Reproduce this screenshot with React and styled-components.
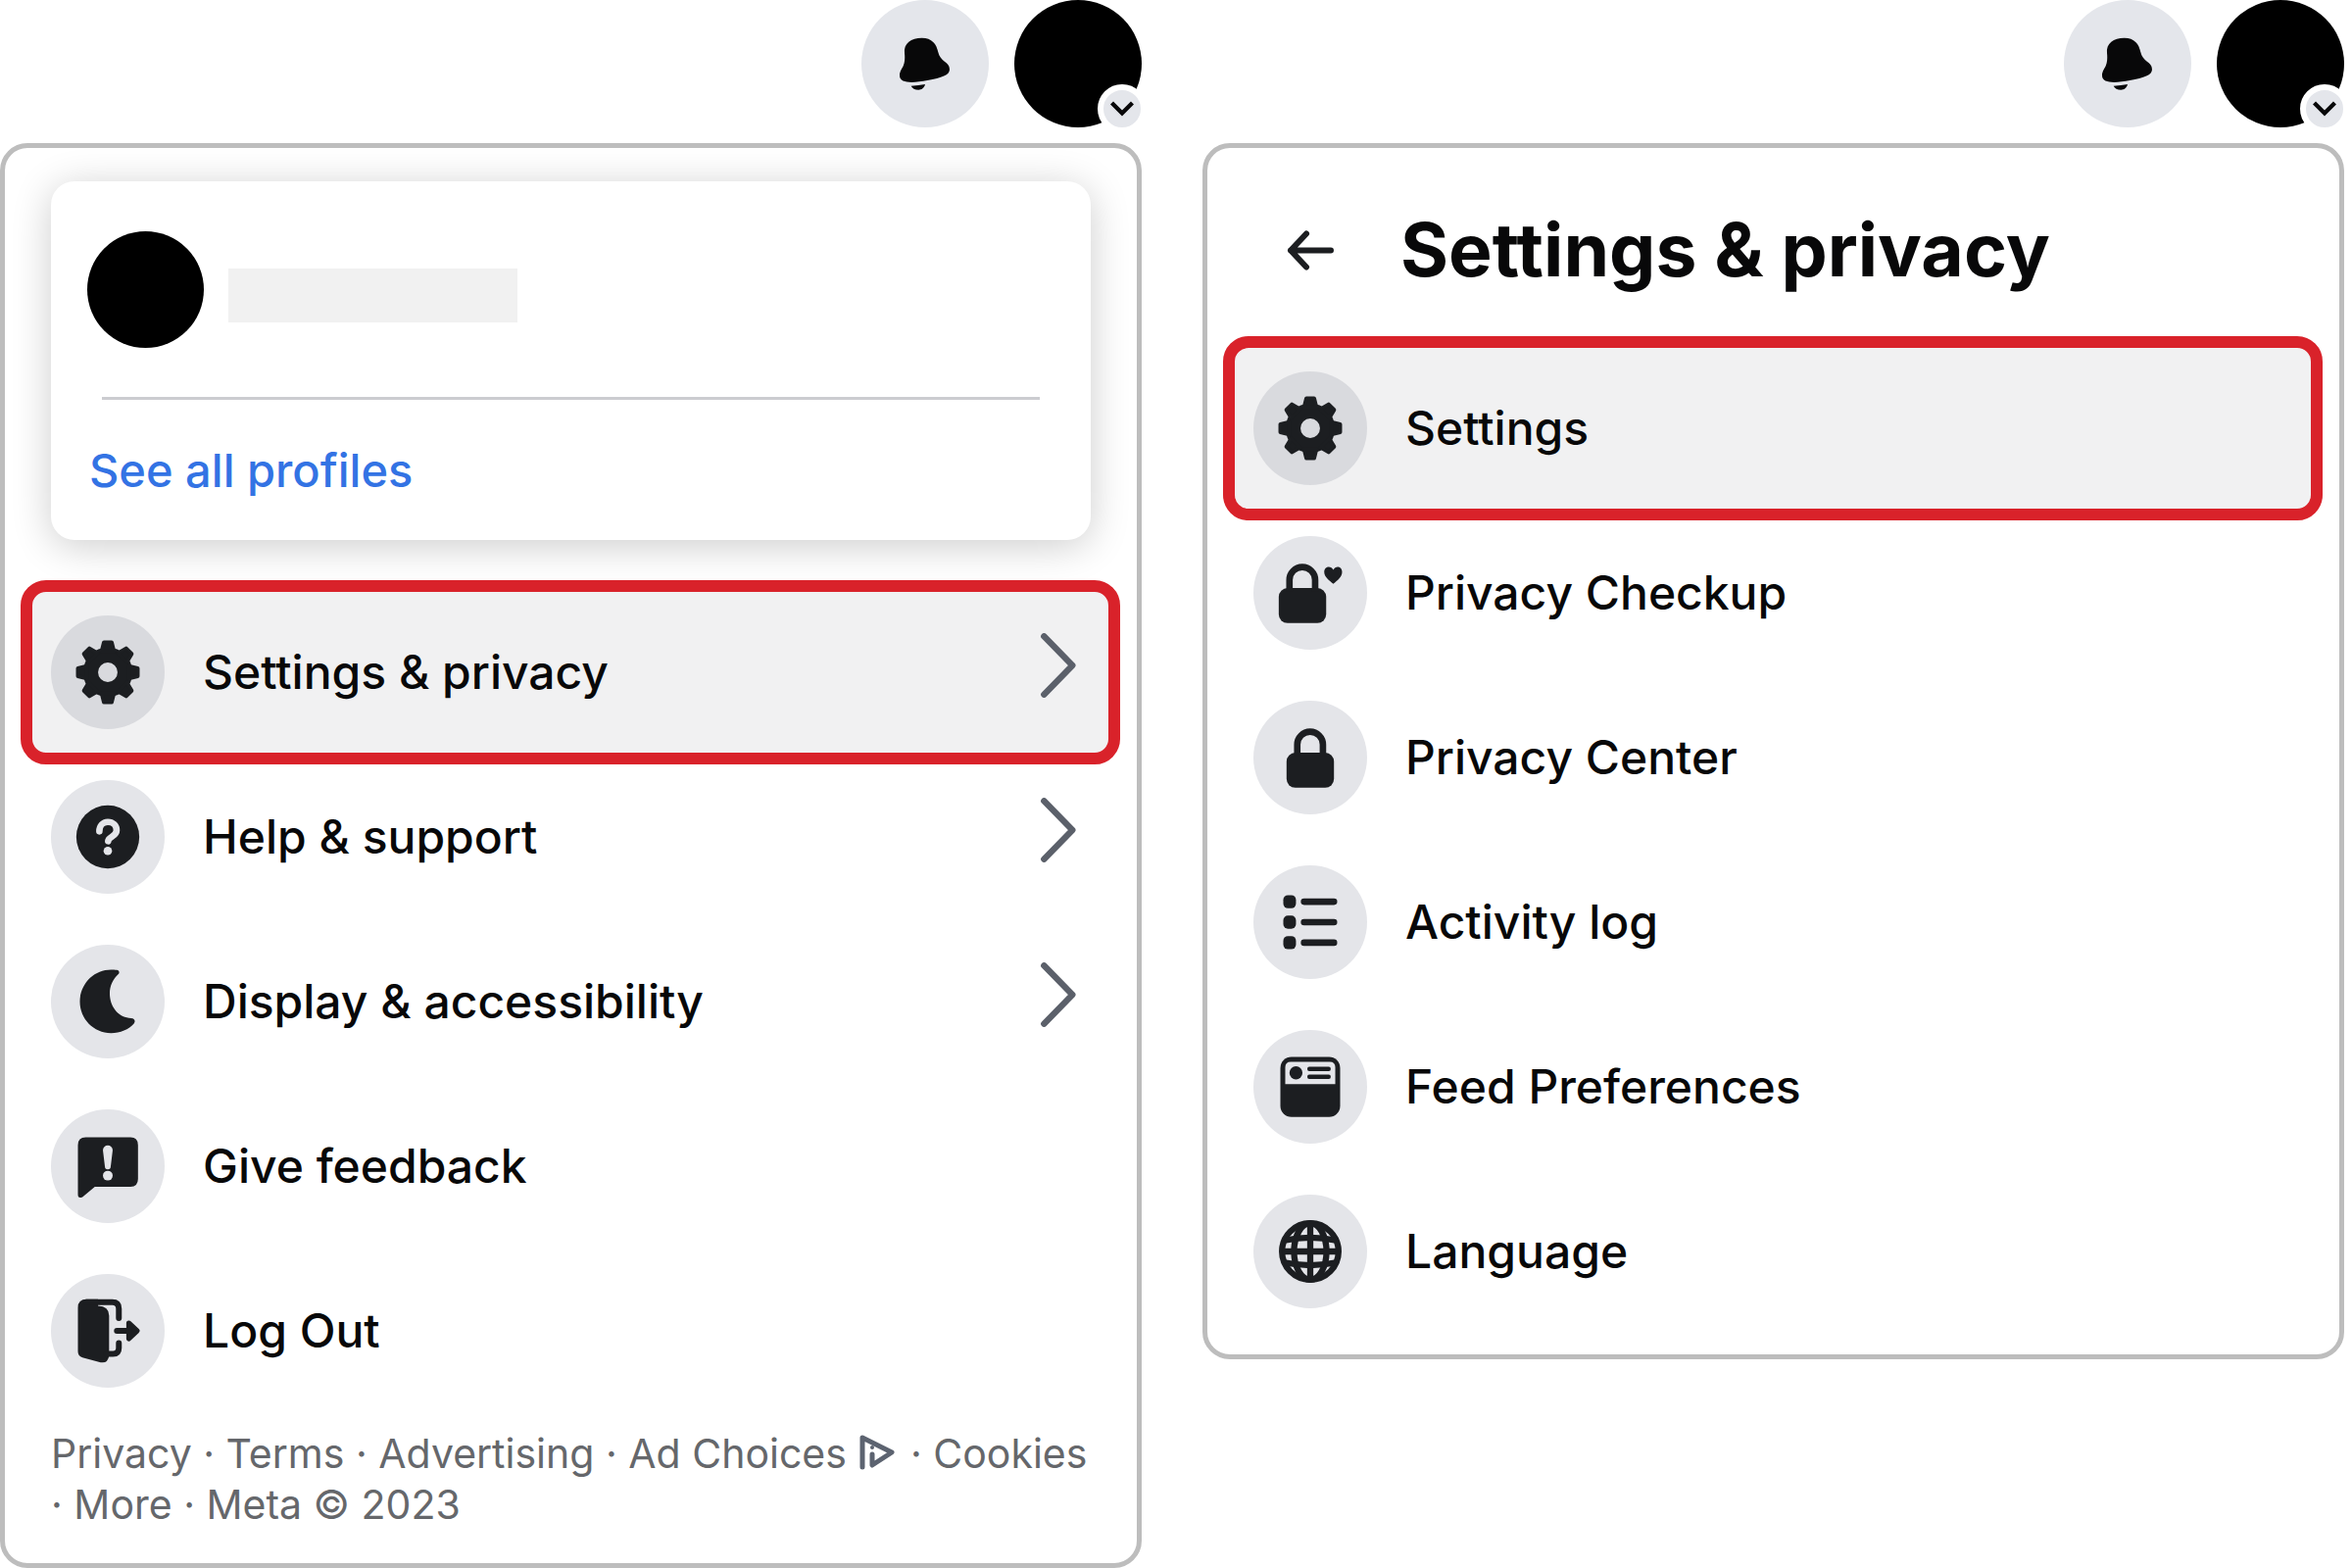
import React, { Fragment } from "react";
import styled, { createGlobalStyle } from "styled-components";

const GlobalStyle = createGlobalStyle`
  * {
    box-sizing: border-box;
  }

  body {
    margin: 0;
    background: #ffffff;
    color: #080809;
    font-family: Inter, "Liberation Sans", sans-serif;
  }

  button {
    border: 0;
    padding: 0;
    background: none;
    color: inherit;
    font: inherit;
    cursor: pointer;
  }
`;

const Page = styled.main`
  display: grid;
  grid-template-columns: 1fr 1fr;
  align-items: start;
  gap: 62px;
  padding-right: 8px;
`;

const TopBar = styled.header`
  display: flex;
  justify-content: flex-end;
  gap: 26px;
  margin-bottom: 16px;
`;

const RoundButton = styled.button`
  position: relative;
  width: 130px;
  height: 130px;
  border-radius: 50%;
  background: ${props => (props.$dark ? "#000000" : "#e4e6eb")};
`;

const Badge = styled.span`
  position: absolute;
  right: -5px;
  bottom: -6px;
  width: 50px;
  height: 50px;
  border: 6px solid #ffffff;
  border-radius: 50%;
  background: #e4e6eb;
`;

const Panel = styled.section`
  display: flex;
  flex-direction: column;
  border: 5px solid #bdbdbd;
  border-radius: 28px;
`;

const ProfileCard = styled.div`
  margin: 34px 47px 51px;
  padding: 51px 37px 42px;
  border-radius: 24px;
  background: #ffffff;
  box-shadow: 0 6px 40px rgba(0, 0, 0, 0.2);
`;

const Profile = styled.div`
  display: flex;
  align-items: center;
  gap: 25px;
`;

const Avatar = styled.div`
  width: 119px;
  height: 119px;
  border-radius: 50%;
  background: #000000;
`;

const NamePlaceholder = styled.div`
  width: 295px;
  height: 55px;
  margin-top: 12px;
  background: #f1f1f1;
`;

const Divider = styled.hr`
  height: 3px;
  margin: 50px 15px 43px;
  border: 0;
  background: #cbccd0;
`;

const ProfilesLink = styled.a`
  display: block;
  padding-left: 2px;
  color: #3373e4;
  font-size: 47px;
  font-weight: 500;
  line-height: 58px;
  text-decoration: none;
`;

const Menu = styled.nav`
  display: flex;
  flex-direction: column;
  padding: 0 17px 0 16px;
`;

// The active row is taller than the rest, so it overlaps its neighbours a bit
const Row = styled.button`
  && {
    display: flex;
    align-items: center;
    gap: 39px;
    height: ${props => (props.$active ? 188 : 168)}px;
    margin: ${props => (props.$active ? "-10px 0" : "0")};
    padding: 0 33px 0 19px;
    border: 12px solid ${props => (props.$active ? "#d9222a" : "transparent")};
    border-radius: 26px;
    background: ${props => (props.$active ? "#f1f1f2" : "none")};
    text-align: left;
  }
`;

const IconCircle = styled.span`
  display: block;
  flex: none;
  width: 116px;
  height: 116px;
  border-radius: 50%;
  background: ${props => (props.$active ? "#d9dade" : "#e4e5e9")};
  color: #1c1e21;
`;

const Svg = styled.svg`
  display: block;
  width: 100%;
  height: 100%;
  fill: currentColor;
`;

const Label = styled.span`
  flex: 1;
  font-size: 48px;
  font-weight: 500;
  line-height: 58px;
`;

const Chevron = styled.svg`
  width: 36px;
  height: 66px;
  margin-bottom: 14px;
`;

const TitleBar = styled.div`
  display: flex;
  align-items: center;
  gap: 34px;
  padding: 58px 47px 52px;
`;

const BackButton = styled.button`
  display: flex;
  justify-content: center;
  width: 116px;
`;

const BackArrow = styled.svg`
  width: 49px;
  height: 41px;
`;

const Title = styled.h1`
  margin: 0;
  font-size: 75px;
  font-weight: 700;
  line-height: 92px;
`;

const Footer = styled.footer`
  padding: 15px 47px 34px;
  color: #65676b;
  font-size: 41px;
  line-height: 52px;
`;

const FooterLink = styled.a`
  color: inherit;
  text-decoration: none;
`;

const AdIcon = styled.svg`
  width: 36px;
  height: 36px;
  margin: 0 4px 0 2px;
  vertical-align: -2px;
`;

const Spacer = styled.div`
  height: 21px;
`;

const GearIcon = () => (
  <Svg viewBox="-175 -175 350 350">
    <circle r="53" fill="none" stroke="currentColor" strokeWidth="46" />
    {[0, 45, 90, 135, 180, 225, 270, 315].map(angle => (
      <path
        key={angle}
        d="M-19 -64 L-12 -92 H12 L19 -64 Z"
        stroke="currentColor"
        strokeWidth="12"
        strokeLinejoin="round"
        transform={`rotate(${angle})`}
      />
    ))}
  </Svg>
);

const HelpIcon = () => (
  <Svg viewBox="-175 -175 350 350">
    <circle r="97" />
    <path
      d="M-26 -17 C-26 -34 -15 -46 0 -46 C16 -46 27 -35 27 -20 C27 0 2 -2 1 13"
      fill="none"
      stroke="#e4e5e9"
      strokeWidth="20"
      strokeLinecap="round"
    />
    <circle cy="43" r="13" fill="#e4e5e9" />
  </Svg>
);

const MoonIcon = () => (
  <Svg viewBox="155 72 350 350">
    <path d="M340 149 C355 149 369 149 364 161 C345 178 336 200 336 222 C336 262 362 297 402 298 C412 299 416 306 411 314 C395 333 368 344 340 344 C286 344 244 300 244 247 C244 194 286 149 340 149 Z" />
  </Svg>
);

const FeedbackIcon = () => (
  <Svg viewBox="155 576 350 350">
    <path d="M262 662 H400 Q423 662 423 686 V790 Q423 814 400 814 H290 L252 846 Q238 852 238 838 V686 Q238 662 262 662 Z" />
    <path
      d="M315 702 a15 15 0 0 1 30 0 L339 752 a9 9 0 0 1 -18 0 Z"
      fill="#e4e5e9"
    />
    <circle cx="330" cy="780" r="15" fill="#e4e5e9" />
  </Svg>
);

const LogOutIcon = () => (
  <Svg viewBox="155 1080 350 350">
    <path d="M238 1184 Q238 1158 264 1158 H300 V1178 Q334 1180 334 1208 V1332 Q330 1356 308 1352 L252 1337 Q238 1332 238 1318 Z" />
    <g
      fill="none"
      stroke="currentColor"
      strokeWidth="18"
      strokeLinecap="round"
      strokeLinejoin="round"
    >
      <path d="M264 1167 H344 Q364 1167 364 1187 V1216" />
      <path d="M364 1293 V1308 Q364 1326 346 1326 H326" />
      <path d="M358 1255 H405" />
    </g>
    <path
      d="M395 1231 L420 1255 L395 1279 Z"
      stroke="currentColor"
      strokeWidth="16"
      strokeLinejoin="round"
    />
  </Svg>
);

const LockShape = () => (
  <Fragment>
    <rect x="197" y="240" width="146" height="108" rx="27" />
    <path
      d="M230 250 V215 A39 39 0 0 1 309 215 V250"
      fill="none"
      stroke="currentColor"
      strokeWidth="20"
    />
  </Fragment>
);

const LockHeartIcon = () => (
  <Svg viewBox="119 80 350 350">
    <LockShape />
    <path d="M365 227 C352 217 337 206 337 191 C337 173 358 170 365 184 C372 170 392 173 392 191 C392 206 378 217 365 227 Z" />
  </Svg>
);

const LockIcon = () => (
  <Svg viewBox="95 80 350 350">
    <LockShape />
  </Svg>
);

const ListIcon = () => (
  <Svg viewBox="119 69 350 350">
    {[161, 224, 287].map(y => (
      <Fragment key={y}>
        <rect x="211" y={y} width="39" height="40" rx="14" />
        <rect x="265" y={y + 10} width="112" height="20" rx="10" />
      </Fragment>
    ))}
  </Svg>
);

const FeedIcon = () => (
  <Svg viewBox="119 573 350 350">
    <rect x="202" y="656" width="184" height="185" rx="34" />
    <path
      d="M217 740 V688 Q217 671 234 671 H354 Q371 671 371 688 V740 Z"
      fill="#e4e5e9"
    />
    <circle cx="250" cy="705" r="20" />
    <rect x="285" y="686" width="72" height="14" rx="6" />
    <rect x="285" y="710" width="72" height="14" rx="6" />
  </Svg>
);

const GlobeIcon = () => (
  <Svg viewBox="-175 -175 350 350">
    <g fill="none" stroke="currentColor" strokeWidth="19">
      <circle r="87" />
      <ellipse rx="50" ry="87" />
      <path d="M0 -87 V87 M-87 0 H87" />
      <path d="M-80 -34 Q0 -51 80 -34 M-80 34 Q0 51 80 34" />
    </g>
  </Svg>
);

const mainItems = [
  { label: "Settings & privacy", icon: GearIcon, active: true, more: true },
  { label: "Help & support", icon: HelpIcon, more: true },
  { label: "Display & accessibility", icon: MoonIcon, more: true },
  { label: "Give feedback", icon: FeedbackIcon },
  { label: "Log Out", icon: LogOutIcon }
];

const privacyItems = [
  { label: "Settings", icon: GearIcon, active: true },
  { label: "Privacy Checkup", icon: LockHeartIcon },
  { label: "Privacy Center", icon: LockIcon },
  { label: "Activity log", icon: ListIcon },
  { label: "Feed Preferences", icon: FeedIcon },
  { label: "Language", icon: GlobeIcon }
];

const AccountBar = () => (
  <TopBar>
    <RoundButton aria-label="Notifications">
      <Svg viewBox="60 0 390 390">
        <path d="M192 162 C189 133 212 116 245 116 C276 116 290 135 295 160 C300 188 330 190 330 212 C330 230 306 237 262 246 C222 254 177 257 177 232 C177 209 197 208 192 162 Z" />
        <path d="M212 263 Q236 262 255 258 C252 270 244 275 235 275 C224 275 215 270 212 263 Z" />
      </Svg>
    </RoundButton>
    <RoundButton $dark aria-label="Account">
      <Badge>
        <Svg viewBox="797 274 116 116">
          <path
            d="M823 314 L855 346 L887 314"
            fill="none"
            stroke="#080809"
            strokeWidth="13"
          />
        </Svg>
      </Badge>
    </RoundButton>
  </TopBar>
);

const MenuList = ({ items }) => (
  <Menu>
    {items.map(({ label, icon: Icon, active, more }) => (
      <Row key={label} $active={active}>
        <IconCircle $active={active}>
          <Icon />
        </IconCircle>
        <Label>{label}</Label>
        {more && (
          <Chevron viewBox="605 200 108 198">
            <path
              d="M615 210 L702 299 L615 388"
              fill="none"
              stroke="#5b606a"
              strokeWidth="19"
              strokeLinecap="round"
              strokeLinejoin="round"
            />
          </Chevron>
        )}
      </Row>
    ))}
  </Menu>
);

const App = () => (
  <Fragment>
    <GlobalStyle />
    <Page>
      <div>
        <AccountBar />
        <Panel>
          <ProfileCard>
            <Profile>
              <Avatar />
              <NamePlaceholder />
            </Profile>
            <Divider />
            <ProfilesLink href="#profiles">See all profiles</ProfilesLink>
          </ProfileCard>
          <MenuList items={mainItems} />
          <Footer>
            <FooterLink href="#privacy">Privacy</FooterLink>
            {" · "}
            <FooterLink href="#terms">Terms</FooterLink>
            {" · "}
            <FooterLink href="#advertising">Advertising</FooterLink>
            {" · "}
            <FooterLink href="#adchoices">
              Ad Choices{" "}
              <AdIcon viewBox="0 0 36 36">
                <path
                  d="M3 33 V3 L33 18 L13 31 V20"
                  fill="none"
                  stroke="#5c6370"
                  strokeWidth="5"
                  strokeLinecap="round"
                  strokeLinejoin="round"
                />
                <circle cx="13" cy="13" r="2" fill="#5c6370" />
              </AdIcon>
            </FooterLink>
            {" · "}
            <FooterLink href="#cookies">Cookies</FooterLink>
            {" ·\u00a0"}
            <FooterLink href="#more">More</FooterLink>
            {" · Meta © 2023"}
          </Footer>
        </Panel>
      </div>

      <div>
        <AccountBar />
        <Panel>
          <TitleBar>
            <BackButton aria-label="Back">
              <BackArrow viewBox="0 0 49 41">
                <path
                  d="M45 20.5 H4 M20 3.5 L4 20.5 L20 37.5"
                  fill="none"
                  stroke="#1c1e21"
                  strokeWidth="6"
                  strokeLinecap="round"
                  strokeLinejoin="round"
                />
              </BackArrow>
            </BackButton>
            <Title>Settings & privacy</Title>
          </TitleBar>
          <MenuList items={privacyItems} />
          <Spacer />
        </Panel>
      </div>
    </Page>
  </Fragment>
);

export default App;
